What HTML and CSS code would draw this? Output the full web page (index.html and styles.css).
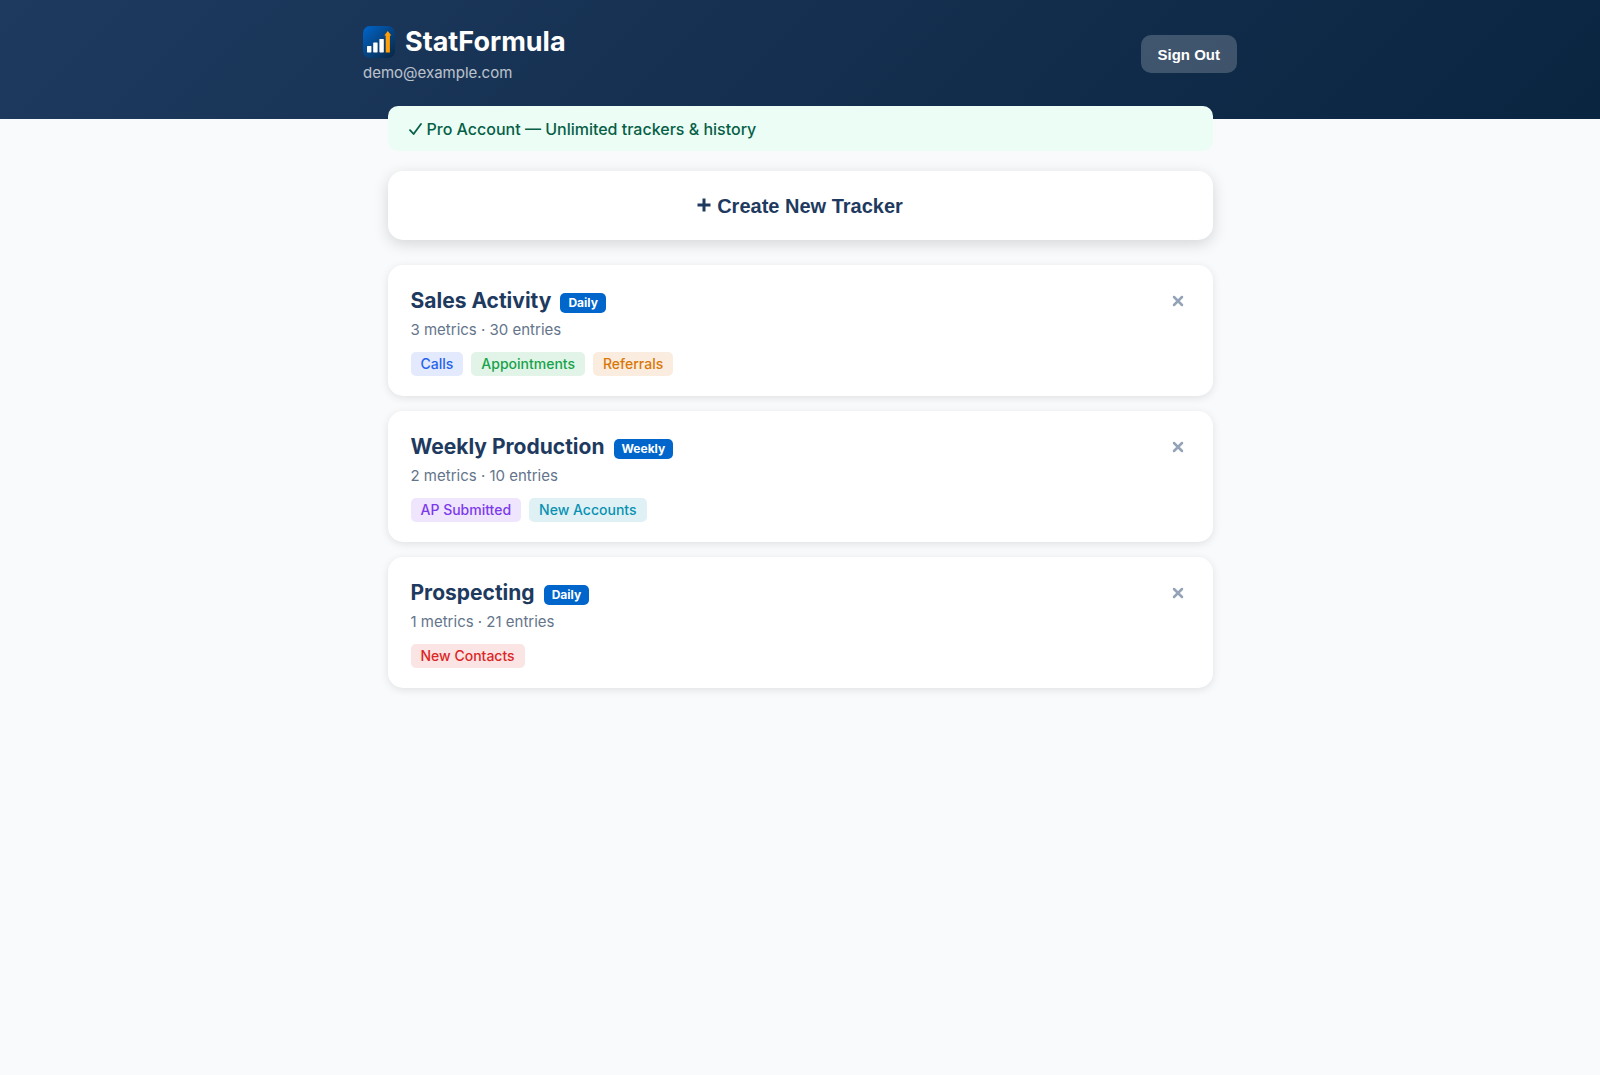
FILE: index.html
```html
<!DOCTYPE html>
<html lang="en">
<head>
    <meta charset="UTF-8">
    <meta name="viewport" content="width=device-width, initial-scale=1.0">
    <title>StatFormula</title>
    <link rel="stylesheet" href="styles.css">
</head>
<body>
    <header class="header">
        <div class="header-content">
            <div>
                <h1 class="brand">
                    <svg class="logo" viewBox="0 0 32 32" aria-hidden="true">
                        <defs>
                            <linearGradient id="logoBg" x1="0" y1="0" x2="1" y2="1">
                                <stop offset="0" stop-color="#0066cc"/>
                                <stop offset="1" stop-color="#0a2540"/>
                            </linearGradient>
                        </defs>
                        <rect width="32" height="32" rx="7" fill="url(#logoBg)"/>
                        <rect x="4" y="20" width="4.4" height="6.4" rx=".6" fill="#fff"/>
                        <rect x="10.2" y="16.5" width="4.4" height="9.9" rx=".6" fill="#fff"/>
                        <rect x="16.4" y="13" width="4.4" height="13.4" rx=".6" fill="#fff"/>
                        <path d="M22.7 26.4V9.5H21.3L24.8 5l3.5 4.5H26.9V26.4z" fill="#ff9f0a"/>
                    </svg>
                    StatFormula
                </h1>
                <div class="email">demo@example.com</div>
            </div>
            <button class="sign-out">Sign Out</button>
        </div>
    </header>

    <main class="container">
        <div class="pro-banner">
            <svg class="check" viewBox="0 0 13 14" aria-hidden="true"><path d="M1 8.2L4.6 12 12 2"/></svg>
            Pro Account — Unlimited trackers &amp; history
        </div>

        <button class="create-btn">
            <svg class="plus" viewBox="0 0 14 14" aria-hidden="true"><path d="M7 0.5v13M0.5 7h13"/></svg>
            Create New Tracker
        </button>

        <div class="tracker-card">
            <div>
                <h2 class="tracker-name">Sales Activity <span class="badge">Daily</span></h2>
                <div class="tracker-meta">3 metrics · 30 entries</div>
                <div class="metrics">
                    <span class="metric blue">Calls</span>
                    <span class="metric green">Appointments</span>
                    <span class="metric orange">Referrals</span>
                </div>
            </div>
            <button class="delete-btn" aria-label="Delete Sales Activity">
                <svg viewBox="0 0 12 12"><path d="M2 2l8 8M10 2l-8 8"/></svg>
            </button>
        </div>

        <div class="tracker-card">
            <div>
                <h2 class="tracker-name">Weekly Production <span class="badge">Weekly</span></h2>
                <div class="tracker-meta">2 metrics · 10 entries</div>
                <div class="metrics">
                    <span class="metric purple">AP Submitted</span>
                    <span class="metric teal">New Accounts</span>
                </div>
            </div>
            <button class="delete-btn" aria-label="Delete Weekly Production">
                <svg viewBox="0 0 12 12"><path d="M2 2l8 8M10 2l-8 8"/></svg>
            </button>
        </div>

        <div class="tracker-card">
            <div>
                <h2 class="tracker-name">Prospecting <span class="badge">Daily</span></h2>
                <div class="tracker-meta">1 metrics · 21 entries</div>
                <div class="metrics">
                    <span class="metric red">New Contacts</span>
                </div>
            </div>
            <button class="delete-btn" aria-label="Delete Prospecting">
                <svg viewBox="0 0 12 12"><path d="M2 2l8 8M10 2l-8 8"/></svg>
            </button>
        </div>
    </main>
</body>
</html>
```
FILE: styles.css
```css
* {
    margin: 0;
    padding: 0;
    box-sizing: border-box;
}
body {
    font-family: Inter, "Liberation Sans", sans-serif;
    background: #f8fafc;
    color: #1e3a5f;
    min-height: 100vh;
}
button {
    font-family: "Liberation Sans", Arial, sans-serif;
    border: none;
    cursor: pointer;
}
.header {
    background: linear-gradient(135deg, #1e3a5f 0%, #0a2540 100%);
    color: white;
    padding: 25px 24px 36px;
}
.header-content {
    max-width: 874px;
    margin: 0 auto;
    display: flex;
    justify-content: space-between;
    align-items: center;
}
.brand {
    display: flex;
    align-items: center;
    gap: 10px;
    font-size: 27px;
    font-weight: 700;
    line-height: 34px;
}
.logo {
    width: 32px;
    height: 32px;
}
.email {
    margin-top: 4px;
    font-size: 15px;
    line-height: 20px;
    opacity: 0.7;
}
.sign-out {
    background: rgba(255, 255, 255, 0.2);
    color: white;
    height: 38px;
    padding: 0 17px;
    border-radius: 10px;
    font-size: 15px;
    font-weight: 700;
}
.container {
    max-width: 873px;
    margin: -13px auto 0;
    padding: 0 24px 24px;
}
.pro-banner {
    display: flex;
    align-items: center;
    gap: 5px;
    height: 45px;
    padding: 0 21px;
    margin-bottom: 20px;
    background: #ecfdf5;
    color: #065f46;
    border-radius: 10px;
    font-size: 16px;
    font-weight: 500;
}
.check {
    width: 13px;
    height: 14px;
    fill: none;
    stroke: #065f46;
    stroke-width: 1.8;
    stroke-linecap: round;
    stroke-linejoin: round;
}
.create-btn {
    display: flex;
    align-items: center;
    justify-content: center;
    gap: 6px;
    width: 100%;
    height: 69px;
    padding-top: 2px;
    margin-bottom: 25px;
    background: white;
    color: #1e3a5f;
    border-radius: 15px;
    box-shadow: 0 4px 15px rgba(0, 0, 0, 0.15);
    font-size: 20px;
    font-weight: 700;
}
.plus {
    width: 14px;
    height: 14px;
    margin-bottom: 4px;
    stroke: #1e3a5f;
    stroke-width: 3;
}
.tracker-card {
    display: flex;
    justify-content: space-between;
    align-items: flex-start;
    padding: 20px 23px;
    margin-bottom: 15px;
    background: white;
    border-radius: 15px;
    box-shadow: 0 2px 8px rgba(0, 0, 0, 0.1);
}
.tracker-name {
    display: flex;
    align-items: center;
    gap: 9px;
    font-size: 21px;
    font-weight: 700;
    line-height: 31px;
}
.badge {
    margin-top: 5px;
    padding: 0 8px;
    background: #0066cc;
    color: white;
    border-radius: 5px;
    font-size: 12px;
    font-weight: 700;
    line-height: 20px;
}
.tracker-meta {
    margin-top: 4px;
    color: #64748b;
    font-size: 15px;
    line-height: 20px;
}
.metrics {
    display: flex;
    flex-wrap: wrap;
    gap: 8px;
    margin-top: 12px;
}
.metric {
    padding: 0 10px;
    border-radius: 5px;
    font-size: 14px;
    font-weight: 500;
    line-height: 24px;
}
.blue { background: #e4eafd; color: #2563eb; }
.green { background: #e2f4e8; color: #16a34a; }
.orange { background: #faede0; color: #d97706; }
.purple { background: #efe5fd; color: #7c3aed; }
.teal { background: #dff1f5; color: #0891b2; }
.red { background: #fbe4e4; color: #dc2626; }
.delete-btn {
    display: flex;
    padding: 10px 6px;
    background: none;
}
.delete-btn svg {
    width: 12px;
    height: 12px;
    stroke: #94a3b8;
    stroke-width: 2.5;
    stroke-linecap: round;
}
```
